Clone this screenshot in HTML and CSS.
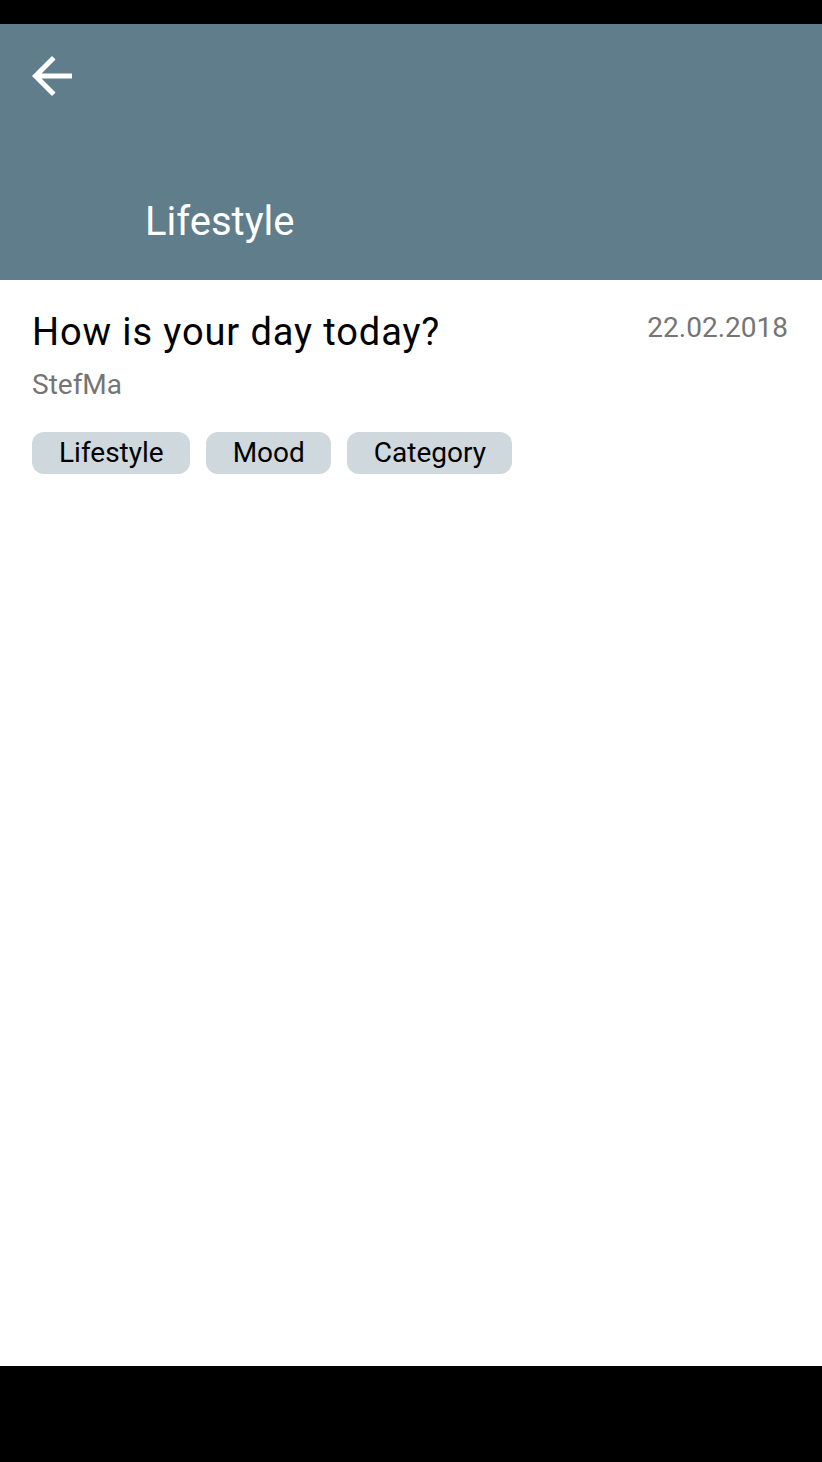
FILE: index.html
```html
<!DOCTYPE html>
<html>
<head>
<meta charset="utf-8">
<link rel="stylesheet" href="styles.css">
</head>
<body>
<div class="screen">
  <div class="statusbar"></div>
  <header class="appbar">
    <div class="toolbar">
      <svg class="back" viewBox="4 4 16 16" width="40" height="40">
        <path d="M20 11H7.830l5.59-5.59L12 4l-8 8 8 8 1.41-1.41L7.83 13H20v-2z" fill="#fff"/>
      </svg>
    </div>
    <h1 class="apptitle">Lifestyle</h1>
  </header>
  <main class="content">
    <div class="head">
      <div class="info">
        <h2 class="qtitle">How is your day today?</h2>
        <div class="author">StefMa</div>
      </div>
      <div class="date">22.02.2018</div>
    </div>
    <div class="chips">
      <span class="chip">Lifestyle</span>
      <span class="chip">Mood</span>
      <span class="chip">Category</span>
    </div>
  </main>
  <div class="navbar"></div>
</div>
</body>
</html>
```
FILE: styles.css
```css
html, body {
  margin: 0;
  padding: 0;
  background: #fff;
}
body {
  font-family: Roboto, "Noto Sans", sans-serif;
}
.screen {
  width: 822px;
  height: 1462px;
  display: flex;
  flex-direction: column;
}
.statusbar {
  height: 24px;
  background: #000;
  flex: none;
}
.appbar {
  height: 256px;
  background: #607d8b;
  flex: none;
  display: flex;
  flex-direction: column;
}
.toolbar {
  height: 104px;
  padding: 0 0 0 32px;
  display: flex;
  align-items: center;
}
.back {
  display: block;
}
.apptitle {
  margin: -22px 0 0 0;
  padding: 80px 0 0 145px;
  font-weight: 400;
  font-size: 40px;
  line-height: 72px;
  color: #fff;
}
.content {
  flex: 1;
  padding: 28px 34px 0 32px;
}
.head {
  display: flex;
  justify-content: space-between;
  align-items: flex-start;
}
.qtitle {
  margin: 0;
  font-weight: 400;
  font-size: 38px;
  letter-spacing: 0.9px;
  line-height: 48px;
  color: #000;
}
.author {
  font-size: 28px;
  line-height: 38px;
  color: #757575;
  margin-top: 10px;
}
.date {
  font-size: 28px;
  line-height: 40px;
  color: #757575;
}
.chips {
  display: flex;
  gap: 16px;
  margin-top: 28px;
}
.chip {
  height: 42px;
  line-height: 42px;
  padding: 0 26px 0 27px;
  border-radius: 12px;
  background: #cfd8dc;
  font-size: 28px;
  color: #000;
}
.navbar {
  height: 96px;
  background: #000;
  flex: none;
}
```
